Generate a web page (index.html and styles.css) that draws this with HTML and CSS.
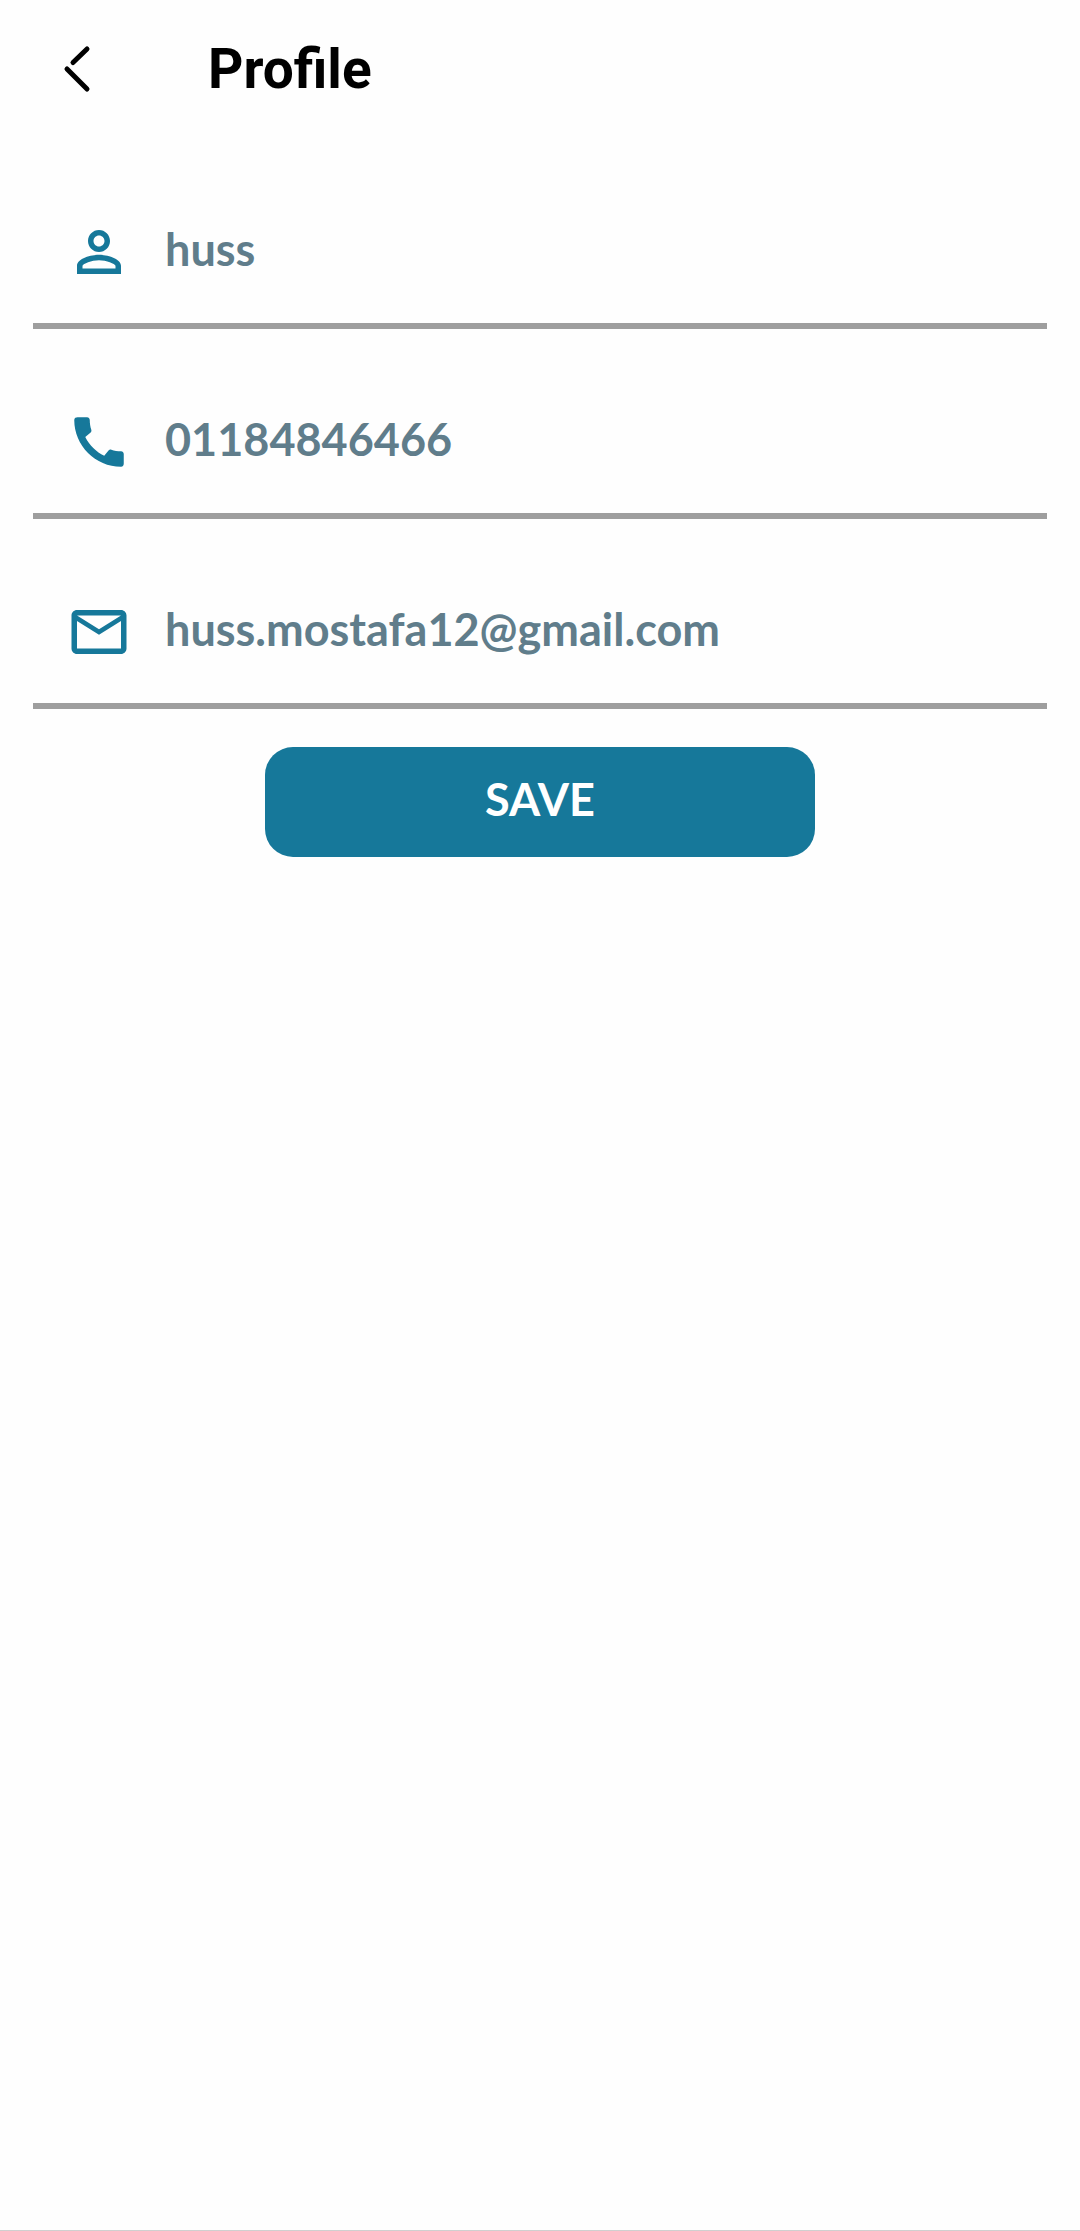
FILE: index.html
```html
<!DOCTYPE html>
<html lang="en">
<head>
  <meta charset="utf-8">
  <meta name="viewport" content="width=device-width, initial-scale=1">
  <title>Profile</title>
  <link rel="stylesheet" href="styles.css">
</head>
<body>
  <header class="topbar">
    <button class="back" type="button" aria-label="Back">
      <svg class="back-icon" viewBox="0 0 66 66" aria-hidden="true">
        <path d="M43 13L29 26.500M23 33L43 53"/>
      </svg>
    </button>
    <h1 class="title">Profile</h1>
  </header>
  <form class="profile">
    <div class="field">
      <label class="field-label" for="name" aria-label="Name">
        <svg class="icon" viewBox="0 0 24 24" aria-hidden="true">
          <path d="M12 6c1.100 0 2 .9 2 2s-.9 2-2 2-2-.9-2-2 .9-2 2-2m0 9c2.700 0 5.800 1.290 6 2v1H6v-.990c.2-.720 3.300-2.010 6-2.010m0-11C9.790 4 8 5.790 8 8s1.790 4 4 4 4-1.790 4-4-1.790-4-4-4zm0 9c-2.670 0-8 1.340-8 4v3h16v-3c0-2.660-5.330-4-8-4z"/>
        </svg>
      </label>
      <input class="input" id="name" type="text" value="huss">
    </div>
    <div class="field">
      <label class="field-label" for="phone" aria-label="Phone">
        <svg class="icon" viewBox="0 0 24 24" aria-hidden="true">
          <path d="M20.010 15.380c-1.230 0-2.420-.2-3.530-.560-.350-.120-.740-.030-1.010.240l-1.570 1.970c-2.830-1.350-5.480-3.900-6.890-6.830l1.950-1.660c.270-.280.350-.670.240-1.020-.370-1.110-.560-2.300-.560-3.530 0-.540-.450-.990-.990-.990H4.190C3.650 3 3 3.240 3 3.990 3 13.280 10.730 21 20.010 21c.710 0 .990-.630.990-1.180v-3.450c0-.540-.450-.990-.990-.990z"/>
        </svg>
      </label>
      <input class="input" id="phone" type="tel" value="01184846466">
    </div>
    <div class="field">
      <label class="field-label" for="email" aria-label="Email">
        <svg class="icon" viewBox="0 0 24 24" aria-hidden="true">
          <path fill-rule="evenodd" d="M4 4h16c1.100 0 2 .9 2 2v12c0 1.100-.9 2-2 2H4c-1.100 0-2-.9-2-2V6c0-1.100.9-2 2-2zm0 4v10h16V8l-8 5-8-5zm0-2l8 5 8-5H4z"/>
        </svg>
      </label>
      <input class="input" id="email" type="email" value="huss.mostafa12@gmail.com">
    </div>
    <button class="save" type="submit">SAVE</button>
  </form>
</body>
</html>
```
FILE: styles.css
```css
* {
  box-sizing: border-box;
}

body {
  margin: 0;
  min-height: 100vh;
  background: #fefefe;
  border-bottom: 1px solid #d0d0d0;
  font-family: Lato, "Liberation Sans", sans-serif;
}

.topbar {
  display: flex;
  align-items: center;
  gap: 98px;
  padding: 35px 44px 36px;
}

.back {
  display: flex;
  padding: 0;
  border: 0;
  background: none;
  cursor: pointer;
}

.back-icon {
  width: 66px;
  height: 66px;
  fill: none;
  stroke: #000;
  stroke-width: 5;
  stroke-linecap: round;
}

.title {
  margin: 0;
  color: #000;
  font: 700 55px/68px Roboto, "Liberation Sans", sans-serif;
}

.profile {
  display: flex;
  flex-direction: column;
  padding: 0 33px;
}

.field {
  display: flex;
  align-items: center;
  gap: 33px;
  padding: 80px 33px 38px;
  border-bottom: 6px solid #9e9e9e;
}

.field-label {
  display: flex;
}

.icon {
  width: 66px;
  height: 66px;
  fill: #16789a;
}

.input {
  flex: 1;
  min-width: 0;
  padding: 0 0 6px;
  border: 0;
  background: none;
  outline: none;
  color: #607d8b;
  font: 700 45px/54px Lato, "Liberation Sans", sans-serif;
}

.save {
  align-self: center;
  width: 550px;
  max-width: 100%;
  margin-top: 38px;
  padding: 25px 0 31px;
  border: 0;
  border-radius: 28px;
  background: #16789a;
  color: #fff;
  font: 700 45px/54px Lato, "Liberation Sans", sans-serif;
  cursor: pointer;
}
```
